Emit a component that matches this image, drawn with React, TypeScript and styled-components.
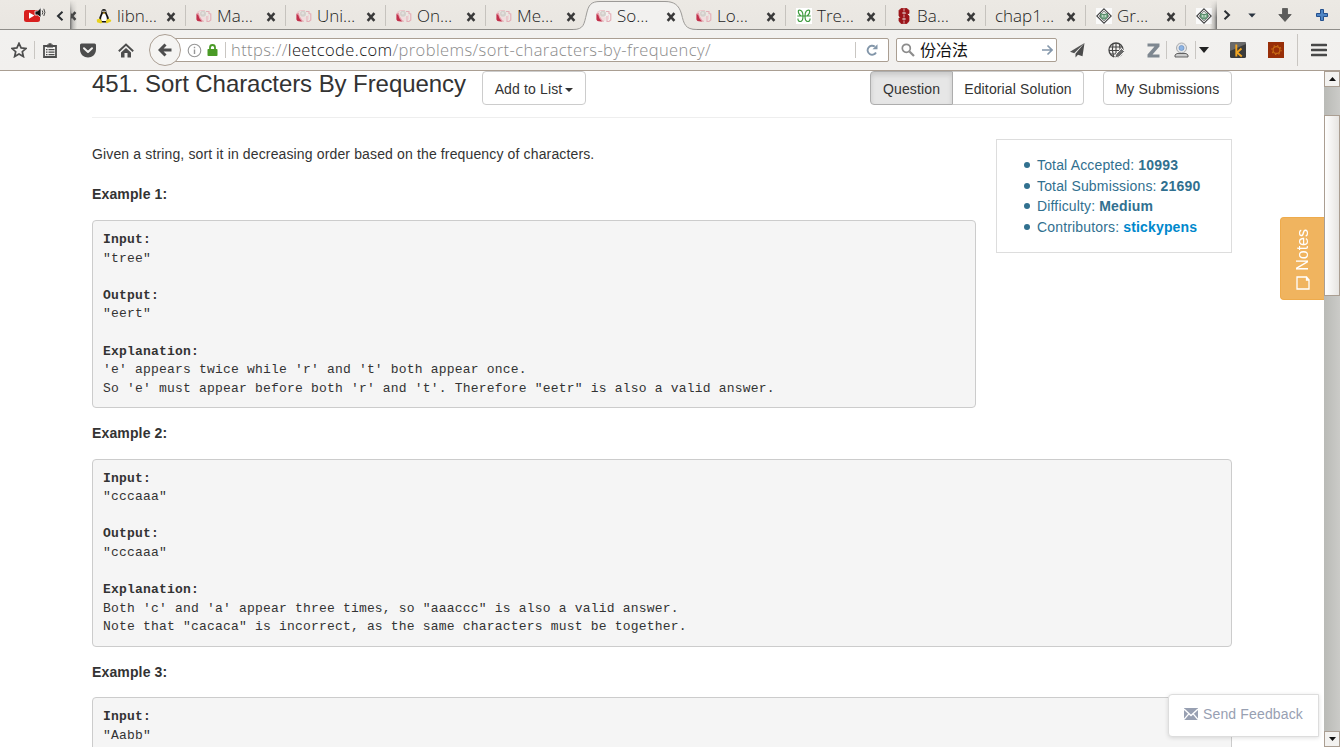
import React from 'react';
import styled, { createGlobalStyle } from 'styled-components';

const Global = createGlobalStyle`
  * { box-sizing: border-box; }
  html, body { margin: 0; padding: 0; background: #fff; }
  body { overflow: hidden; }
  svg { display: block; flex: none; }
`;

const Window = styled.div`
  width: 1340px;
  height: 747px;
  display: flex;
  flex-direction: column;
  overflow: hidden;
  font-family: 'Liberation Sans', Arial, sans-serif;
  font-size: 14px;
  letter-spacing: 0.14px;
  line-height: 20px;
  color: #333;
`;

/* ---------- tab strip ---------- */
const TabStrip = styled.div`
  height: 30px;
  flex: none;
  display: flex;
  background: linear-gradient(#ece9e4, #e9e6e1);
  border-bottom: 1px solid #8f8d89;
  font-family: 'Open Sans', 'Noto Sans', sans-serif;
  font-weight: 300;
  font-size: 17px;
  letter-spacing: 0;
  color: #1c1c1c;
`;
const StripStart = styled.div`
  width: 70px;
  flex: none;
  display: flex;
  padding: 7px 0 0 24px;
  gap: 10px;
`;
const ScrollLeft = styled.div`
  padding-top: 4px;
`;
const TabScroller = styled.div`
  position: relative;
  width: 1147px;
  flex: none;
  display: flex;
  overflow: hidden;
  height: 30px;
`;
const CutTab = styled.div`
  width: 15px;
  flex: none;
  padding: 11px 0 0 1px;
`;
const EdgeShadow = styled.div<{ $right?: boolean }>`
  position: absolute;
  top: 0;
  ${(p) => (p.$right ? 'right: 0;' : 'left: 0;')}
  width: 7px;
  height: 29px;
  background: linear-gradient(${(p) => (p.$right ? 'to left' : 'to right')}, rgba(70,70,70,.75), rgba(110,110,110,.35) 40%, rgba(120,120,120,0));
  mask-image: linear-gradient(transparent, #000 60%);
`;
const TabItem = styled.div<{ $active?: boolean; $noLine?: boolean }>`
  position: relative;
  width: 100px;
  flex: none;
  height: 30px;
  display: flex;
  align-items: center;
  padding: 1px 0 0 10px;
  border-left: 1px solid transparent;
  background: ${(p) => (p.$active || p.$noLine ? 'none' : 'linear-gradient(#c6c3be,#c6c3be) no-repeat 0 5px / 1px 21px')};
  background-origin: border-box;
  z-index: ${(p) => (p.$active ? 1 : 0)};
`;
const TabLabel = styled.span<{ $bare?: boolean }>`
  position: relative;
  flex: 1;
  padding-left: ${(p) => (p.$bare ? 0 : 5)}px;
  margin-left: ${(p) => (p.$bare ? -1 : 0)}px;
  white-space: nowrap;
  line-height: 26px;
`;
const CloseSlot = styled.span`
  position: relative;
  margin-right: 9px;
  padding-top: 2px;
`;
const FaviconSlot = styled.span`
  position: relative;
`;
const ActiveShape = styled.svg`
  position: absolute;
  left: -13px;
  top: 0;
`;
const StripEnd = styled.div`
  flex: 1;
  display: flex;
  align-items: center;
  padding: 1px 12px 0 6px;
`;
const EndSlot = styled.div<{ $gap: number; $drop?: number }>`
  margin-left: ${(p) => p.$gap}px;
  padding-top: ${(p) => p.$drop ?? 0}px;
`;

/* ---------- navigation bar ---------- */
const NavBar = styled.div`
  height: 41px;
  flex: none;
  display: flex;
  align-items: center;
  background: linear-gradient(#f2f1ef, #f2f0ee);
  border-bottom: 1px solid #aa9e92;
`;
const NavSlot = styled.div<{ $gap: number }>`
  margin-left: ${(p) => p.$gap}px;
  flex: none;
`;
const NavLine = styled.div<{ $gap: number; $h?: number }>`
  width: 1px;
  height: ${(p) => p.$h ?? 18}px;
  flex: none;
  margin-left: ${(p) => p.$gap}px;
  background: #c9c6c2;
`;
const BackButton = styled.div`
  position: relative;
  z-index: 1;
  width: 32px;
  height: 32px;
  flex: none;
  margin-left: 15px;
  border: 1px solid #ab9f94;
  border-radius: 50%;
  background: #f5f4f2;
  display: flex;
  align-items: center;
  justify-content: center;
`;
const Field = styled.div<{ $w: number; $join?: boolean }>`
  width: ${(p) => p.$w}px;
  height: 24px;
  flex: none;
  display: flex;
  align-items: center;
  background: #fff;
  border: 1px solid #aa9e92;
  border-radius: 2px;
  margin-left: ${(p) => (p.$join ? -12 : 7)}px;
`;
const Url = styled.span`
  width: 624px;
  margin-left: 5px;
  font-family: 'Open Sans', 'Noto Sans', sans-serif;
  font-weight: 300;
  font-size: 16.5px;
  letter-spacing: 0.41px;
  line-height: 22px;
  color: #8a8a8a;
  white-space: nowrap;
  b { font-weight: 300; color: #111; }
`;
const Query = styled.span`
  flex: 1;
  margin-left: 5px;
  padding-bottom: 2px;
  font-family: 'Noto Sans CJK SC', sans-serif;
  font-size: 16px;
  letter-spacing: 0;
  line-height: 20px;
  color: #111;
`;
const GoSlot = styled.div`
  margin-right: 3px;
`;

/* ---------- page ---------- */
const Viewport = styled.div`
  position: relative;
  flex: 1;
  display: flex;
  min-height: 0;
`;
const Page = styled.main`
  flex: 1;
  overflow: hidden;
  padding-left: 92px;
`;
const Container = styled.div`
  width: 1140px;
`;
const Header = styled.header`
  height: 47px;
  display: flex;
  align-items: flex-start;
  border-bottom: 1px solid #eee;
`;
const Title = styled.h3`
  margin: 0 16px 0 0;
  width: 374px;
  white-space: nowrap;
  font-weight: 400;
  font-size: 24px;
  line-height: 26px;
  letter-spacing: -0.07px;
`;
const Button = styled.button<{ $w: number; $on?: boolean; $side?: 'l' | 'r' }>`
  width: ${(p) => p.$w}px;
  height: 34px;
  padding: 1px 0 0;
  display: flex;
  align-items: center;
  justify-content: center;
  white-space: nowrap;
  font: inherit;
  letter-spacing: inherit;
  color: #333;
  background: ${(p) => (p.$on ? '#e6e6e6' : '#fff')};
  border: 1px solid ${(p) => (p.$on ? '#adadad' : '#ccc')};
  border-radius: ${(p) => (p.$side === 'l' ? '4px 0 0 4px' : p.$side === 'r' ? '0 4px 4px 0' : '4px')};
  box-shadow: ${(p) => (p.$on ? 'inset 0 3px 5px rgba(0,0,0,.125)' : 'none')};
  ${(p) => p.$side === 'r' && 'border-left: 0;'}
`;
const Caret = styled.i`
  margin: 2px 0 0 3px;
  border: 4px solid transparent;
  border-top-color: #333;
  border-bottom: 0;
`;
const Group = styled.div`
  display: flex;
  margin: 0 19px 0 auto;
`;
const Intro = styled.section`
  display: flex;
  align-items: flex-start;
  gap: 20px;
`;
const Lead = styled.div`
  width: 884px;
`;
const Paragraph = styled.p`
  margin: 26px 0 0;
  white-space: nowrap;
`;
const ExampleTitle = styled.h4<{ $first?: boolean }>`
  margin: ${(p) => (p.$first ? '20px 0 16.2px' : '14.9px 0 15.7px')};
  font-size: 14px;
  line-height: 20px;
  font-weight: 700;
`;
const Pre = styled.pre`
  margin: 0;
  height: 188px;
  padding: 10px 10px 0;
  border: 1px solid #ccc;
  border-radius: 4px;
  background: #f5f5f5;
  font-family: 'Liberation Mono', monospace;
  font-size: 13px;
  line-height: 18.57px;
  letter-spacing: 0.195px;
  color: #333;
`;
const Stats = styled.ul`
  width: 236px;
  height: 114px;
  margin: 21px 0 0;
  padding: 15px 0 0 40px;
  list-style: none;
  border: 1px solid #ddd;
  color: #31708f;
  a { color: #0088cc; font-weight: 700; }
`;
const Stat = styled.li`
  display: flex;
  align-items: center;
  height: 20.6px;
  gap: 4px;
  white-space: nowrap;
  letter-spacing: 0.16px;
  &::before {
    content: '';
    width: 6px;
    height: 6px;
    margin: 0 3px 0 -13px;
    border-radius: 50%;
    background: #31708f;
  }
`;
const Notes = styled.div`
  position: absolute;
  right: 16px;
  top: 146px;
  width: 44px;
  height: 83px;
  padding-bottom: 9px;
  display: flex;
  flex-direction: column;
  align-items: center;
  justify-content: flex-end;
  gap: 5px;
  color: #fff;
  background: #f0b45f;
  border: 1px solid #eeab4c;
  border-right: 0;
  border-radius: 4px 0 0 4px;
  font-size: 16px;
  letter-spacing: 0;
  span { writing-mode: vertical-rl; transform: rotate(180deg); }
`;
const Feedback = styled.div`
  position: absolute;
  right: 21px;
  bottom: 10px;
  width: 151px;
  height: 43px;
  display: flex;
  align-items: center;
  gap: 5px;
  padding: 0 0 3px 15px;
  background: #fff;
  border: 1px solid #ddd;
  border-radius: 4px 0 0 4px;
  box-shadow: 0 1px 4px rgba(0,0,0,.13);
  color: #98a0b2;
  white-space: nowrap;
  letter-spacing: 0.15px;
`;

/* ---------- scrollbar ---------- */
const Scrollbar = styled.div`
  width: 16px;
  display: flex;
  flex-direction: column;
  background: linear-gradient(to right, #b9bab6, #cbcbc8);
`;
const ScrollButton = styled.div`
  height: 16px;
  display: flex;
  align-items: center;
  justify-content: center;
  border: 1px solid #aa9e92;
  background: #f3f2f0;
`;
const Thumb = styled.div`
  height: 181px;
  margin: 28px 0 auto;
  border: 1px solid #aa9e92;
  background: linear-gradient(to right, #fff, #e6e4e1);
`;

/* ---------- icons ---------- */
const Close = () => (
  <svg width="10" height="10" viewBox="0 0 10 10">
    <path d="M1.6 1.2 8.4 8.8M8.4 1.2 1.6 8.8" stroke="#3a3a3a" strokeWidth="2.5" />
  </svg>
);
const LeetIcon = () => (
  <svg width="16" height="16" viewBox="0 0 16 16">
    <path d="M.5 5 2.500 4.500 5.500 9.500 8 13 7.500 13.800 2 13.200.5 12Z" fill="#e3a0ab" />
    <path d="M.5 6 2.200 7 3.500 10.500 6 13.500 1.500 13 .5 11.500Z" fill="#c22f4a" />
    <path d="M3 3.500 5.500 4.500 6.500 9.500 10 9 9.500 13 6.500 12.500 3.500 8Z" fill="#f1dcdd" />
    <path d="M1 4.500Q4 1.500 9 2.500" fill="none" stroke="#ecc6cb" strokeWidth="1" />
    <circle cx="7" cy="5.800" r="3" fill="#d3d0cc" />
    <circle cx="6.800" cy="5.300" r="1.200" fill="#e4e1de" />
    <path d="M10 3.500H13V5.500L14.800 6V12L13 13.500H11V8" fill="none" stroke="#e4adb6" strokeWidth="1.100" />
    <path d="M12.300 7V11.500" fill="none" stroke="#f1d3d7" />
  </svg>
);
const TuxIcon = () => (
  <svg width="16" height="16" viewBox="0 0 16 16">
    <path d="M5.500 3C5.500.3 10.300.3 10.300 3C10.300 6 13.200 8 13 12L10.500 14.500H5L3 12C3 8 5.500 6 5.500 3Z" fill="#111" />
    <path d="M6.800 5.500H9.200C10 8 11.500 9.500 10.700 13H5.500C4.500 9.500 6 8 6.800 5.500Z" fill="#fff" />
    <circle cx="7" cy="3.200" r=".8" fill="#fff" /><circle cx="9" cy="3.200" r=".8" fill="#fff" />
    <path d="M6.500 4.500H9.500L8 6Z" fill="#e8b10c" />
    <path d="M.8 11.500 4 10.500 6.500 14.500 5 15.500 1 14.300ZM15.200 12 12 10.500 9.800 13 10.500 15.500 15 13.500Z" fill="#e9d21c" />
  </svg>
);
const GeeksIcon = () => (
  <svg width="16" height="16" viewBox="0 0 16 16">
    <rect width="16" height="16" fill="#fff" />
    <path d="M2.500 2.200C5.500 1.500 7 4 7 8C7 11.500 6 13.500 4.300 13.500C2.500 13.500 1.800 12 2 10.500M1.300 8H14.700M13.500 2.200C10.500 1.500 9 4 9 8C9 11.500 10 13.500 11.700 13.500C13.500 13.500 14.200 12 14 10.500M2.500 2.200C1.800 5 3 6.500 5 8M13.500 2.200C14.200 5 13 6.500 11 8" fill="none" stroke="#3c9a3c" strokeWidth="1.150" />
  </svg>
);
const StanfordIcon = () => (
  <svg width="16" height="16" viewBox="0 0 16 16">
    <path d="M5 .5H11L13 2.500V5.500H10V4H6V6H11L13 8V13L11 15.500H5L3 13V10H6V12H10V10H5L3 8V2.500Z" fill="#9b1419" stroke="#9b1419" strokeWidth=".8" />
    <path d="M8 .5V3.500M8 6.500V9.500M8 12.500V15.500" stroke="#d9a9ab" strokeWidth="1" />
  </svg>
);
const DiamondIcon = () => (
  <svg width="16" height="16" viewBox="0 0 16 16">
    <rect width="16" height="16" fill="#fafafa" />
    <path d="M8 .8 15.200 8 8 15.200.8 8Z" fill="#fff" stroke="#444" strokeWidth="1.100" />
    <path d="M8 3 13 8 8 13 3 8Z" fill="#dfe8e1" stroke="#666" strokeWidth=".7" />
    <path d="M4.500 5.500 7 6.500H9L11.500 5.500V9L9.500 11H6.500L4.500 9Z" fill="#7fae8e" stroke="#3d7a54" strokeWidth=".8" />
    <path d="M6 8H7.200M8.800 8H10" stroke="#fff" strokeWidth="1.200" />
  </svg>
);
const VideoSoundIcon = () => (
  <svg width="22" height="16" viewBox="0 0 22 16">
    <rect x="0" y="3" width="16" height="12" rx="2.500" fill="#d8201f" />
    <path d="M5 5.500 10.500 8.500 5 11.800Z" fill="#fff" />
    <path d="M11 4H13.500L17 .5V10.500L13.500 8H11Z" fill="#111" stroke="#fff" strokeWidth=".8" />
    <path d="M18.200 3.500Q19.500 5.500 18.200 7.500M19.800 1.800Q22 5.500 19.800 9" fill="none" stroke="#333" strokeWidth=".9" />
  </svg>
);
const Chevron = ({ flip }: { flip?: boolean }) => (
  <svg width="8" height="10" viewBox="0 0 8 10">
    <path d={flip ? 'M1.500.8 6 5 1.500 9.200' : 'M6.500.8 2 5 6.500 9.200'} fill="none" stroke="#2b2f33" strokeWidth="2" />
  </svg>
);

type Tab = { label: string; icon?: React.ReactNode; active?: boolean; noLine?: boolean };
const tabs: Tab[] = [
  { label: 'libn…', icon: <TuxIcon /> },
  { label: 'Ma…', icon: <LeetIcon /> },
  { label: 'Uni…', icon: <LeetIcon /> },
  { label: 'On…', icon: <LeetIcon /> },
  { label: 'Me…', icon: <LeetIcon /> },
  { label: 'So…', icon: <LeetIcon />, active: true },
  { label: 'Lo…', icon: <LeetIcon />, noLine: true },
  { label: 'Tre…', icon: <GeeksIcon /> },
  { label: 'Ba…', icon: <StanfordIcon /> },
  { label: 'chap1…' },
  { label: 'Gr…', icon: <DiamondIcon /> },
  { label: '', icon: <DiamondIcon /> },
];

const Tabs = () => (
  <TabStrip>
    <StripStart>
      <VideoSoundIcon />
      <ScrollLeft><Chevron /></ScrollLeft>
    </StripStart>
    <TabScroller>
      <CutTab>
        <svg width="6" height="10" viewBox="4 0 6 10"><path d="M1.600 1.200 8.400 8.800M8.400 1.200 1.600 8.800" stroke="#3a3a3a" strokeWidth="2.500" /></svg>
      </CutTab>
      {tabs.map((t, i) => (
        <TabItem key={i} $active={t.active} $noLine={t.noLine}>
          {t.active && (
            <ActiveShape width="126" height="30" viewBox="0 0 126 30">
              <path d="M0 30V29.500C11 29.500 11 24 13.500 14C15.500 5 18 1.500 27 1.500H92C101 1.500 106 5 108.500 14C111 24 112 29.500 124 29.500V30Z" fill="#f2f1ef" />
              <path d="M0 29.500C11 29.500 11 24 13.500 14C15.500 5 18 1.500 27 1.500H92C101 1.500 106 5 108.500 14C111 24 112 29.500 124 29.500" fill="none" stroke="#9c9a97" />
            </ActiveShape>
          )}
          {t.icon && <FaviconSlot>{t.icon}</FaviconSlot>}
          <TabLabel $bare={!t.icon}>{t.label}</TabLabel>
          <CloseSlot><Close /></CloseSlot>
        </TabItem>
      ))}
      <EdgeShadow />
      <EdgeShadow $right />
    </TabScroller>
    <StripEnd>
      <Chevron flip />
      <EndSlot $gap={17} $drop={1}>
        <svg width="8" height="5" viewBox="0 0 8 5"><path d="M.3.500H7.700L4 4.500Z" fill="#2a3440" /></svg>
      </EndSlot>
      <EndSlot $gap={22}>
        <svg width="14" height="14" viewBox="0 0 14 14"><path d="M4.500.5H9.500V6.500H13.200L7 13.500.8 6.500H4.500Z" fill="#5c5c5b" stroke="#4a4a49" strokeWidth=".7" /></svg>
      </EndSlot>
      <EndSlot $gap={24}>
        <svg width="12" height="12" viewBox="0 0 12 12"><path d="M4.500.5H7.500V4.500H11.500V7.500H7.500V11.500H4.500V7.500H.5V4.500H4.500Z" fill="#4f86c6" stroke="#24508e" /></svg>
      </EndSlot>
    </StripEnd>
  </TabStrip>
);

const dark = '#4d4d4d';
const Nav = () => (
  <NavBar>
    <NavSlot $gap={11}>
      <svg width="16" height="16" viewBox="0 0 16 16"><path d="M8 1.300 10.100 5.900 15 6.400 11.300 9.700 12.400 14.600 8 12.100 3.600 14.600 4.700 9.700 1 6.400 5.900 5.900Z" fill="none" stroke={dark} strokeWidth="1.700" /></svg>
    </NavSlot>
    <NavLine $gap={7} />
    <NavSlot $gap={8}>
      <svg width="14" height="15" viewBox="0 0 14 15">
        <path d="M1 3H13V14H1Z" fill="#f2f1ef" stroke={dark} strokeWidth="1.800" />
        <path d="M4 3V1.500H5.500V.3H8.500V1.500H10V4.500H4ZM3 6H4.500V7.300H3ZM5.500 6H11.500V7.300H5.500ZM3 8.500H4.500V9.800H3ZM5.500 8.500H11.500V9.800H5.500ZM3 11H4.500V12.300H3ZM5.500 11H11.500V12.300H5.500Z" fill={dark} />
      </svg>
    </NavSlot>
    <NavSlot $gap={23}>
      <svg width="16" height="15" viewBox="0 0 16 15"><path d="M1.500.5H14.500Q16 .5 16 2V6.500C16 11.500 12 14.500 8 14.500S0 11.500 0 6.500V2Q0 .5 1.500.5Z" fill={dark} /><path d="M4 5.300 8 9 12 5.300" fill="none" stroke="#f2f1ef" strokeWidth="2" strokeLinecap="round" strokeLinejoin="round" /></svg>
    </NavSlot>
    <NavSlot $gap={22}>
      <svg width="16" height="15" viewBox="0 0 16 15"><path d="M.8 8.300 8 1.500 15.200 8.300" fill="none" stroke={dark} strokeWidth="1.900" /><path d="M3 9.500 8 5 13 9.500V14.500H9.500V10H6.500V14.500H3Z" fill={dark} /></svg>
    </NavSlot>
    <BackButton>
      <svg width="14" height="14" viewBox="0 0 14 14"><path d="M13.500 7H2.500M7.500 1.500 2 7 7.500 12.500" fill="none" stroke={dark} strokeWidth="3" /></svg>
    </BackButton>
    <Field $w={720} $join>
      <NavSlot $gap={17}>
        <svg width="15" height="15" viewBox="0 0 15 15"><circle cx="7.500" cy="7.500" r="6.300" fill="none" stroke="#979797" strokeWidth="1.100" /><path d="M7.500 6.500V11M7.500 3.800V5.200" stroke="#979797" strokeWidth="1.400" /></svg>
      </NavSlot>
      <NavSlot $gap={5}>
        <svg width="11" height="12" viewBox="0 0 11 12"><path d="M3 6V3.500A2.500 2.500 0 0 1 8 3.500V6" fill="none" stroke="#4a9a26" strokeWidth="1.800" /><rect x=".5" y="5" width="10" height="7" rx=".8" fill="#4a9a26" /></svg>
      </NavSlot>
      <NavLine $gap={7} $h={16} />
      <Url>https://<b>leetcode.com</b>/problems/sort-characters-by-frequency/</Url>
      <NavLine $gap={0} $h={16} />
      <NavSlot $gap={10}>
        <svg width="12" height="12" viewBox="0 0 12 12"><path d="M10 8.500A4.500 4.500 0 1 1 8.800 2.600" fill="none" stroke="#8296a9" strokeWidth="1.900" /><path d="M11.500.3V5.300H6.500Z" fill="#8296a9" /></svg>
      </NavSlot>
    </Field>
    <Field $w={161}>
      <NavSlot $gap={4}>
        <svg width="14" height="14" viewBox="0 0 14 14"><circle cx="5.300" cy="5.300" r="4" fill="none" stroke="#8c8c8c" strokeWidth="1.700" /><path d="M8.500 8.500 13 13" stroke="#8c8c8c" strokeWidth="2.200" /></svg>
      </NavSlot>
      <Query>份冶法</Query>
      <GoSlot>
        <svg width="11" height="12" viewBox="0 0 11 12"><path d="M0 6H9.500M5.500 1.500 10 6 5.500 10.500" fill="none" stroke="#8497ab" strokeWidth="1.600" /></svg>
      </GoSlot>
    </Field>
    <NavSlot $gap={13}>
      <svg width="15" height="16" viewBox="0 0 15 16"><path d="M14.500 1 0 9.800 4.200 11.300Z" fill="#555" /><path d="M14.500 1 5.500 11.800V15.500L8 12.800 12.500 14.200Z" fill="#4b4b4b" /></svg>
    </NavSlot>
    <NavSlot $gap={23}>
      <svg width="17" height="17" viewBox="0 0 17 17"><circle cx="8" cy="8" r="7" fill="none" stroke="#454545" strokeWidth="1.300" /><path d="M2 5H14M1 8.500H15M2.500 12H13M5 2Q3.500 8 5.500 14M8 1V15M11.500 2Q13 8 11 14" fill="none" stroke="#454545" strokeWidth="1.100" /><path d="M6.500 16 8 12 13.500 6.500 16.500 9.500 11 15Z" fill="#6b6b6b" stroke="#f2f1ef" strokeWidth="1" /></svg>
    </NavSlot>
    <NavSlot $gap={22}>
      <svg width="13" height="15" viewBox="0 0 13 15"><path d="M.5.500H12.500V3.500L5.500 11.500H12.500V14.500H.5V11.500L7.500 3.500H.5Z" fill="#7e8790" /></svg>
    </NavSlot>
    <NavLine $gap={6} />
    <NavSlot $gap={7}>
      <svg width="15" height="16" viewBox="0 0 15 16"><circle cx="7.500" cy="6" r="5" fill="#e4e5e7" stroke="#a9abad" /><circle cx="7.500" cy="6" r="2.500" fill="#8db4e4" stroke="#6c8fc0" strokeWidth=".7" /><path d="M3 11.500H12L14 13V15H1V13Z" fill="#ccc" stroke="#555" strokeWidth=".9" /></svg>
    </NavSlot>
    <NavLine $gap={6} />
    <NavSlot $gap={3}>
      <svg width="10" height="6" viewBox="0 0 10 6"><path d="M0 0H10L5 6Z" fill="#222" /></svg>
    </NavSlot>
    <NavSlot $gap={21}>
      <svg width="16" height="16" viewBox="0 0 16 16"><rect width="16" height="16" rx="1.500" fill="#3b3b3b" /><path d="M0 9 16 2V1.500Q16 0 14.500 0H1.500Q0 0 0 1.500Z" fill="#696969" /><path d="M6.300 2.500V14.500M11.500 6.500 7 10.500 11.800 14.500" fill="none" stroke="#f2a622" strokeWidth="1.900" /></svg>
    </NavSlot>
    <NavSlot $gap={22}>
      <svg width="16" height="16" viewBox="0 0 16 16"><rect width="16" height="16" fill="#982e08" /><circle cx="8.500" cy="8" r="3.400" fill="none" stroke="#c96c14" strokeWidth="1.100" /><circle cx="8.500" cy="8" r="4.600" fill="none" stroke="#c96c14" strokeWidth="1.100" strokeDasharray="1.400 2.210" /></svg>
    </NavSlot>
    <NavLine $gap={13} $h={32} />
    <NavSlot $gap={13}>
      <svg width="16" height="14" viewBox="0 0 16 14"><path d="M1 2H15M1 7H15M1 12H15" stroke="#484848" strokeWidth="2.600" strokeLinecap="round" /></svg>
    </NavSlot>
  </NavBar>
);

export default function App() {
  return (
    <Window>
      <Global />
      <Tabs />
      <Nav />
      <Viewport>
        <Page>
          <Container>
            <Header>
              <Title>451. Sort Characters By Frequency</Title>
              <Button $w={104}>Add to List<Caret /></Button>
              <Group>
                <Button $w={83} $on $side="l">Question</Button>
                <Button $w={131} $side="r">Editorial Solution</Button>
              </Group>
              <Button $w={129}>My Submissions</Button>
            </Header>
            <Intro>
              <Lead>
                <Paragraph>Given a string, sort it in decreasing order based on the frequency of characters.</Paragraph>
                <ExampleTitle $first>Example 1:</ExampleTitle>
                <Pre>
                  <b>Input:</b>{'\n"tree"\n\n'}
                  <b>Output:</b>{'\n"eert"\n\n'}
                  <b>Explanation:</b>{`\n'e' appears twice while 'r' and 't' both appear once.\nSo 'e' must appear before both 'r' and 't'. Therefore "eetr" is also a valid answer.`}
                </Pre>
              </Lead>
              <Stats>
                <Stat>Total Accepted: <b>10993</b></Stat>
                <Stat>Total Submissions: <b>21690</b></Stat>
                <Stat>Difficulty: <b>Medium</b></Stat>
                <Stat>Contributors: <a>stickypens</a></Stat>
              </Stats>
            </Intro>
            <ExampleTitle>Example 2:</ExampleTitle>
            <Pre>
              <b>Input:</b>{'\n"cccaaa"\n\n'}
              <b>Output:</b>{'\n"cccaaa"\n\n'}
              <b>Explanation:</b>{`\nBoth 'c' and 'a' appear three times, so "aaaccc" is also a valid answer.\nNote that "cacaca" is incorrect, as the same characters must be together.`}
            </Pre>
            <ExampleTitle>Example 3:</ExampleTitle>
            <Pre>
              <b>Input:</b>{'\n"Aabb"\n'}
            </Pre>
          </Container>
        </Page>
        <Scrollbar>
          <ScrollButton><svg width="7" height="4" viewBox="0 0 7 4"><path d="M0 4H7L3.500 0Z" fill="#111" /></svg></ScrollButton>
          <Thumb />
          <ScrollButton><svg width="7" height="4" viewBox="0 0 7 4"><path d="M0 0H7L3.500 4Z" fill="#111" /></svg></ScrollButton>
        </Scrollbar>
        <Notes>
          <span>Notes</span>
          <svg width="14" height="14" viewBox="0 0 14 14"><path d="M1 1H10.500V4H13V13H1ZM10.500 1 13 4" fill="none" stroke="#fff" strokeWidth="1.300" /></svg>
        </Notes>
        <Feedback>
          <svg width="14" height="12" viewBox="0 0 14 12"><rect width="14" height="12" fill="#98a0b2" /><path d="M0 1 7 7.500 14 1M0 11.500 4.800 5.800M14 11.500 9.200 5.800" fill="none" stroke="#fff" strokeWidth="1.300" /></svg>
          <span>Send Feedback</span>
        </Feedback>
      </Viewport>
    </Window>
  );
}
